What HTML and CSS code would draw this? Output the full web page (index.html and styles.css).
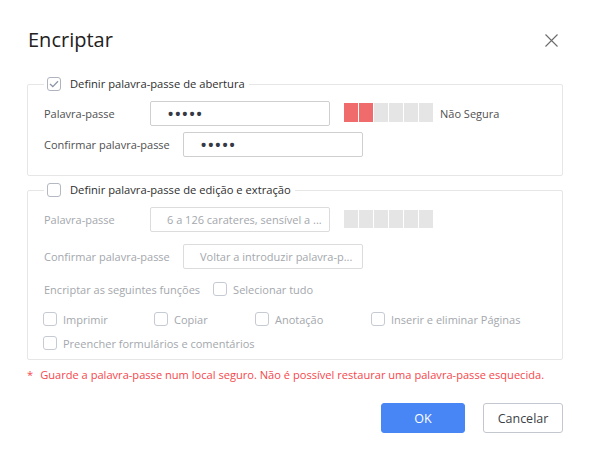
FILE: index.html
```html
<!DOCTYPE html>
<html lang="pt">
<head>
<meta charset="utf-8">
<title>Encriptar</title>
<link rel="stylesheet" href="styles.css">
</head>
<body>
<div class="dialog">
  <div class="header">
    <h1 class="title">Encriptar</h1>
    <span class="close" aria-label="Fechar">
      <svg width="13" height="13" viewBox="0 0 13 13"><path d="M0.5 0.5L12.5 12.5M12.5 0.5L0.5 12.5" stroke="#6b6b6b" stroke-width="1.1" fill="none"/></svg>
    </span>
  </div>

  <fieldset class="group group-open">
    <legend class="legend">
      <span class="cb cb-checked">
        <svg width="10" height="8" viewBox="0 0 10 8"><path d="M1 4L3.8 6.6L9 1.2" stroke="#8d95a6" stroke-width="1.3" fill="none"/></svg>
      </span>
      <span class="legend-text">Definir palavra-passe de abertura</span>
    </legend>
    <div class="row">
      <span class="lbl">Palavra-passe</span>
      <div class="field"><span class="dots">•••••</span></div>
      <div class="meter">
        <span class="seg seg-on"></span><span class="seg seg-on"></span><span class="seg"></span><span class="seg"></span><span class="seg"></span><span class="seg"></span>
      </div>
      <span class="strength">Não Segura</span>
    </div>
    <div class="row row-second">
      <span class="lbl lbl-wide">Confirmar palavra-passe</span>
      <div class="field"><span class="dots">•••••</span></div>
    </div>
  </fieldset>

  <fieldset class="group group-edit">
    <legend class="legend">
      <span class="cb"></span>
      <span class="legend-text">Definir palavra-passe de edição e extração</span>
    </legend>
    <div class="row">
      <span class="lbl">Palavra-passe</span>
      <div class="field field-off"><span class="ph">6 a 126 carateres, sensível a ...</span></div>
      <div class="meter">
        <span class="seg"></span><span class="seg"></span><span class="seg"></span><span class="seg"></span><span class="seg"></span><span class="seg"></span>
      </div>
    </div>
    <div class="row row-second2">
      <span class="lbl lbl-wide">Confirmar palavra-passe</span>
      <div class="field field-off"><span class="ph">Voltar a introduzir palavra-p...</span></div>
    </div>
    <div class="line line-encrypt">
      <span class="lbl-auto">Encriptar as seguintes funções</span>
      <label class="opt opt-all"><span class="cb cb-off"></span><span>Selecionar tudo</span></label>
    </div>
    <div class="opts">
      <label class="opt"><span class="cb cb-off"></span><span>Imprimir</span></label>
      <label class="opt"><span class="cb cb-off"></span><span>Copiar</span></label>
      <label class="opt"><span class="cb cb-off"></span><span>Anotação</span></label>
      <label class="opt"><span class="cb cb-off"></span><span>Inserir e eliminar Páginas</span></label>
      <label class="opt opt-wide"><span class="cb cb-off"></span><span>Preencher formulários e comentários</span></label>
    </div>
  </fieldset>

  <p class="warn"><span class="star">*</span>Guarde a palavra-passe num local seguro. Não é possível restaurar uma palavra-passe esquecida.</p>

  <div class="actions">
    <button class="btn btn-primary">OK</button>
    <button class="btn btn-default">Cancelar</button>
  </div>
</div>
</body>
</html>
```

FILE: styles.css
```css
* { box-sizing: border-box; }
html, body { margin: 0; padding: 0; background: #ffffff; }
body {
  font-family: "Open Sans", "Noto Sans", "Liberation Sans", sans-serif;
  font-size: 11px;
  color: #333;
}
.dialog {
  width: 590px;
  height: 455px;
  padding: 0 27px;
}
.header {
  display: flex;
  justify-content: space-between;
  align-items: center;
  padding-top: 24px;
  height: 56px;
}
.title {
  margin: 0 0 0 1px;
  font-size: 20px;
  font-weight: 400;
  line-height: 32px;
  color: #222;
}
.close {
  display: flex;
  margin-right: 5px;
}
.group {
  margin: 0;
  border: 1px solid #e6e6e6;
  border-radius: 2px;
  padding: 10px 16px 0 16px;
  min-width: 0;
}
.group-open { margin-top: 21px; padding-bottom: 18px; }
.group-edit { margin-top: 7px; padding-bottom: 6px; }
.legend {
  display: flex;
  align-items: center;
  padding: 0 4px 0 3px;
  height: 14px;
  line-height: 14px;
  font-size: 11.2px;
}
.legend-text { margin-left: 9px; color: #2e2e2e; }
.cb {
  display: inline-flex;
  align-items: center;
  justify-content: center;
  width: 14px;
  height: 14px;
  border: 1px solid #b3b8c3;
  border-radius: 3px;
  background: #fff;
  flex: none;
}
.cb-checked { border-color: #aeb3be; }
.cb-off { border-color: #c6cad3; }
.row {
  display: flex;
  align-items: center;
  height: 25px;
}
.row-second { margin-top: 6px; }
.row-second2 { margin-top: 12px; }
.lbl {
  width: 96px;
  margin-right: 10px;
  color: #505050;
  flex: none;
  white-space: nowrap;
}
.lbl-wide { width: 129px; }
.group-edit .lbl, .lbl-auto, .opt { color: #a4a7ad; }
.field {
  width: 180px;
  height: 25px;
  border: 1px solid #cfcfcf;
  border-radius: 2px;
  padding-left: 16px;
  display: flex;
  align-items: center;
  flex: none;
}
.field-off { border-color: #dcdcdc; }
.dots {
  font-size: 19px;
  letter-spacing: 0;
  color: #353945;
  line-height: 1;
  margin-top: 1px;
}
.ph { color: #a4a7ad; white-space: nowrap; }
.meter {
  display: flex;
  gap: 1px;
  margin-left: 14px;
  height: 19px;
  margin-top: -2px;
}
.seg { width: 14px; height: 100%; background: #e5e5e5; }
.seg-on { background: #f06b6b; }
.group-edit .meter { height: 18px; }
.strength { margin-left: 7px; color: #505050; }
.line {
  display: flex;
  align-items: center;
  height: 20px;
}
.line-encrypt { margin-top: 10px; }
.lbl-auto { white-space: nowrap; }
.opt {
  display: flex;
  align-items: center;
  gap: 6px;
  height: 20px;
  white-space: nowrap;
}
.opt-all { margin-left: 13px; }
.opts {
  display: grid;
  grid-template-columns: 111px 101px 116px auto;
  row-gap: 4px;
  margin-top: 10px;
  margin-left: -1px;
}
.opt-wide { grid-column: 1 / -1; }
.warn {
  margin: 7px 0 0 0;
  line-height: 16px;
  font-size: 11.1px;
  color: #f5474d;
  white-space: nowrap;
}
.star { margin-right: 7px; }
.actions {
  display: flex;
  justify-content: flex-end;
  gap: 18px;
  margin-top: 20px;
}
.btn {
  height: 30px;
  border-radius: 3px;
  font-family: inherit;
  font-size: 12.5px;
  padding: 0;
  cursor: pointer;
}
.btn-primary {
  width: 84px;
  background: #4886f6;
  border: 1px solid #4886f6;
  color: #fff;
}
.btn-default {
  width: 80px;
  background: #fff;
  border: 1px solid #c3c7cf;
  color: #3c3f46;
}
```
